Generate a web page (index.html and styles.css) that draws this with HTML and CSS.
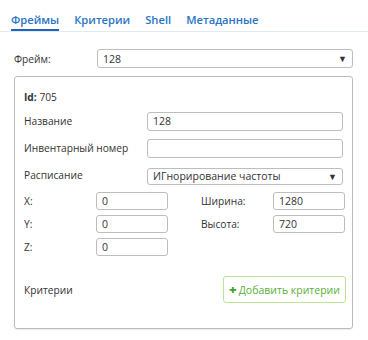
FILE: index.html
```html
<!DOCTYPE html>
<html>
<head>
<meta charset="utf-8">
<link rel="stylesheet" href="styles.css">
</head>
<body>
<div class="tabs">
  <div class="tab active">Фреймы</div>
  <div class="tab">Критерии</div>
  <div class="tab">Shell</div>
  <div class="tab">Метаданные</div>
</div>
<div class="content">
  <div class="frame-row">
    <span class="label">Фрейм:</span>
    <div class="select wide"><span>128</span><span class="arrow">▼</span></div>
  </div>
  <div class="panel">
    <div class="id"><b>Id:</b> 705</div>
    <div class="row">
      <span class="label">Название</span>
      <div class="input long">128</div>
    </div>
    <div class="row">
      <span class="label">Инвентарный номер</span>
      <div class="input long"></div>
    </div>
    <div class="row">
      <span class="label">Расписание</span>
      <div class="select long sched"><span>ИГнорирование частоты</span><span class="arrow">▼</span></div>
    </div>
    <div class="grid">
      <span class="label">X:</span><div class="input small">0</div>
      <span class="label second">Ширина:</span><div class="input small second">1280</div>
      <span class="label">Y:</span><div class="input small">0</div>
      <span class="label second">Высота:</span><div class="input small second">720</div>
      <span class="label">Z:</span><div class="input small">0</div>
    </div>
    <div class="crit-row">
      <span class="label">Критерии</span>
      <div class="btn"><span class="plus">+</span>Добавить критерии</div>
    </div>
  </div>
</div>
</body>
</html>
```
FILE: styles.css
```css
html, body { margin: 0; padding: 0; background: #fff; }
body { font-family: "Open Sans", "Noto Sans", sans-serif; font-size: 10.2px; color: #333; width: 368px; height: 340px; overflow: hidden; }
.tabs { display: flex; gap: 15px; padding: 9px 0 0 11px; border-bottom: 1px solid #e3eaf1; height: 22px; }
.tab { font-size: 11.2px; font-weight: 600; color: #2a74c5; line-height: 17px; height: 22px; box-sizing: border-box; padding-top: 2px; }
.tab.active { border-bottom: 2px solid #2163c0; }
.content { padding: 17px 15px 0 14px; }
.frame-row { display: flex; align-items: center; height: 19px; }
.frame-row .label { width: 83px; }
.select, .input { box-sizing: border-box; border: 1px solid #bdbdbd; border-radius: 3px; display: flex; align-items: center; padding: 0 5px; font-size: 10.5px; color: #333; background: #fff; }
.select.wide { width: 256px; height: 19px; justify-content: space-between; }
.arrow { font-size: 9px; color: #333; }
.panel { margin-top: 8px; border: 1px solid #bbb; border-radius: 3px; height: 253px; box-sizing: border-box; padding: 13px 6px 0 9px; box-shadow: 0 1px 1px rgba(0,0,0,0.08); }
.id { height: 14px; line-height: 14px; margin-bottom: 7px; }
.row { display: flex; align-items: center; height: 20px; margin-bottom: 7px; }
.row .label { width: 123px; }
.input.long, .select.long { width: 196px; height: 19px; }
.select.sched { height: 17px; justify-content: space-between; margin-top: 2px; }
.grid { display: grid; grid-template-columns: 72px 72px 33px 72px 72px; row-gap: 5px; align-items: center; margin-top: 1px; }
.input.small { width: 72px; height: 18px; }
.grid > .label { grid-column: 1; }
.grid > .input { grid-column: 2; }
.grid > .label.second { grid-column: 3 / 5; padding-left: 33px; }
.grid > .input.second { grid-column: 5; }
.crit-row { display: flex; align-items: center; justify-content: space-between; margin-top: 20px; }
.btn { box-sizing: border-box; width: 123px; height: 27px; border: 1px solid #b9e59a; border-radius: 3px; display: flex; align-items: center; justify-content: center; color: #5aaf3a; font-size: 10.5px; }
.plus { font-weight: 800; font-size: 13px; color: #42a02a; margin-right: 2px; line-height: 1; }
```
